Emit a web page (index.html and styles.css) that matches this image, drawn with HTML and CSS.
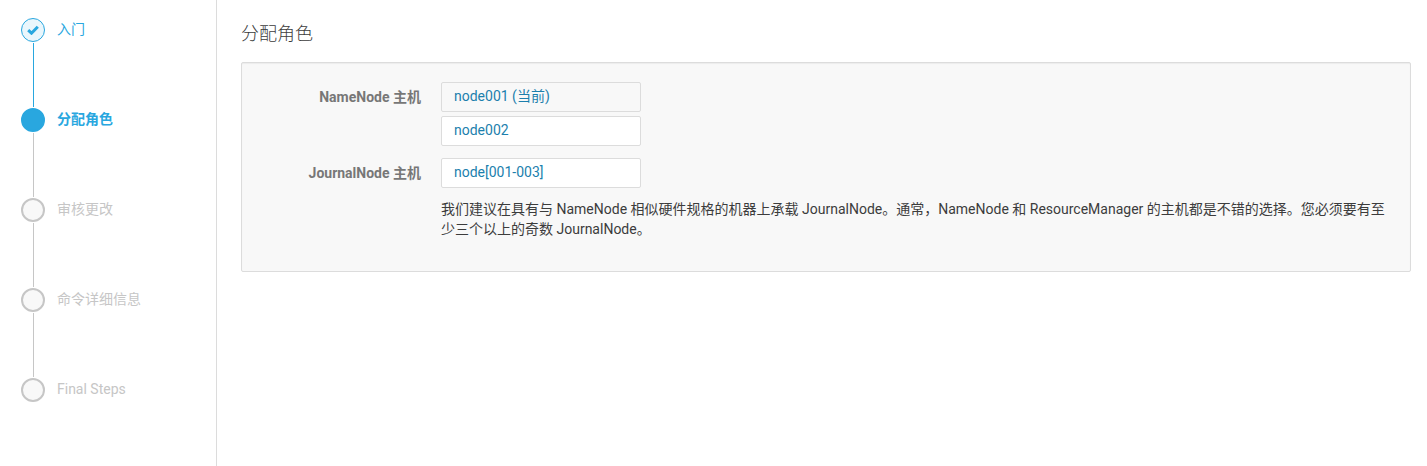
FILE: index.html
```html
<!DOCTYPE html>
<html lang="zh-CN">
<head>
<meta charset="utf-8">
<title>分配角色</title>
<link rel="stylesheet" href="styles.css">
</head>
<body>
<div class="wizard">
  <nav class="sidebar">
    <ol class="steps">
      <li class="step done">
        <div class="rail"><span class="dot"><svg class="check" viewBox="0 0 12 10"><path d="M1.2 5.1 4.5 8.2 10.8 1.8"/></svg></span><span class="line"></span></div>
        <span class="name">入门</span>
      </li>
      <li class="step active">
        <div class="rail"><span class="dot"></span><span class="line"></span></div>
        <span class="name">分配角色</span>
      </li>
      <li class="step">
        <div class="rail"><span class="dot"></span><span class="line"></span></div>
        <span class="name">审核更改</span>
      </li>
      <li class="step">
        <div class="rail"><span class="dot"></span><span class="line"></span></div>
        <span class="name">命令详细信息</span>
      </li>
      <li class="step">
        <div class="rail"><span class="dot"></span></div>
        <span class="name">Final Steps</span>
      </li>
    </ol>
  </nav>
  <main class="content">
    <h1 class="title">分配角色</h1>
    <section class="panel">
      <div class="row">
        <div class="label">NameNode 主机</div>
        <div class="fields">
          <div class="host readonly">node001 (当前)</div>
          <div class="host">node002</div>
        </div>
      </div>
      <div class="row">
        <div class="label">JournalNode 主机</div>
        <div class="fields">
          <div class="host">node[001-003]</div>
          <p class="help">我们建议在具有与 NameNode 相似硬件规格的机器上承载 JournalNode。通常，NameNode 和 ResourceManager 的主机都是不错的选择。您必须要有至少三个以上的奇数 JournalNode。</p>
        </div>
      </div>
    </section>
  </main>
</div>
</body>
</html>
```
FILE: styles.css
```css
* { box-sizing: border-box; }
body {
  margin: 0;
  background: #fff;
  color: #3c3c3c;
  font: 14px/20px Roboto, "Noto Sans CJK SC", sans-serif;
}
.wizard { display: flex; height: 466px; overflow: hidden; }
.sidebar {
  flex: 0 0 217px;
  padding: 18px 0 0 21px;
  border-right: 1px solid #dcdcdc;
}
.steps { margin: 0; padding: 0; list-style: none; }
.step { display: flex; gap: 12px; height: 90px; color: #c6c6c6; }
.rail { display: flex; flex-direction: column; align-items: center; width: 24px; }
.dot {
  display: flex;
  align-items: center;
  justify-content: center;
  flex: none;
  width: 24px;
  height: 24px;
  border: 2px solid #c6c6c6;
  border-radius: 50%;
  background: #f8f8f8;
}
.line { width: 1px; height: 64px; margin: 1px 0 0 1px; background: #c6c6c6; }
.name { padding-top: 1px; white-space: nowrap; }
.done, .active { color: #29a7df; }
.done .dot { border: 1px solid #29a7df; background: #e9f6fc; }
.done .line { background: #29a7df; }
.check { width: 12px; height: 10px; fill: none; stroke: #29a7df; stroke-width: 3; }
.active .dot { border-color: #29a7df; background: #29a7df; }
.active .name { font-weight: 700; }
.content { flex: 1; min-width: 0; padding: 21px 16px 0 24px; }
.title { margin: 0 0 15px; font-size: 18px; line-height: 26px; font-weight: 300; }
.panel {
  display: flex;
  flex-direction: column;
  gap: 12px;
  height: 210px;
  padding: 19px;
  border: 1px solid #dcdcdc;
  border-radius: 2px;
  background: #f8f8f8;
  box-shadow: inset 0 1px 1px rgba(0, 0, 0, .05);
}
.row { display: flex; gap: 20px; }
.label {
  flex: 0 0 160px;
  padding-top: 5px;
  color: #777;
  font-weight: 700;
  text-align: right;
}
.fields { display: flex; flex-direction: column; gap: 4px; width: 950px; }
.host {
  width: 200px;
  height: 30px;
  padding: 3px 12px;
  border: 1px solid #dcdcdc;
  border-radius: 2px;
  background: #fff;
  color: #1c7fad;
}
.readonly { background: #f8f8f8; }
.help { margin: 7px 0 0; }
```
